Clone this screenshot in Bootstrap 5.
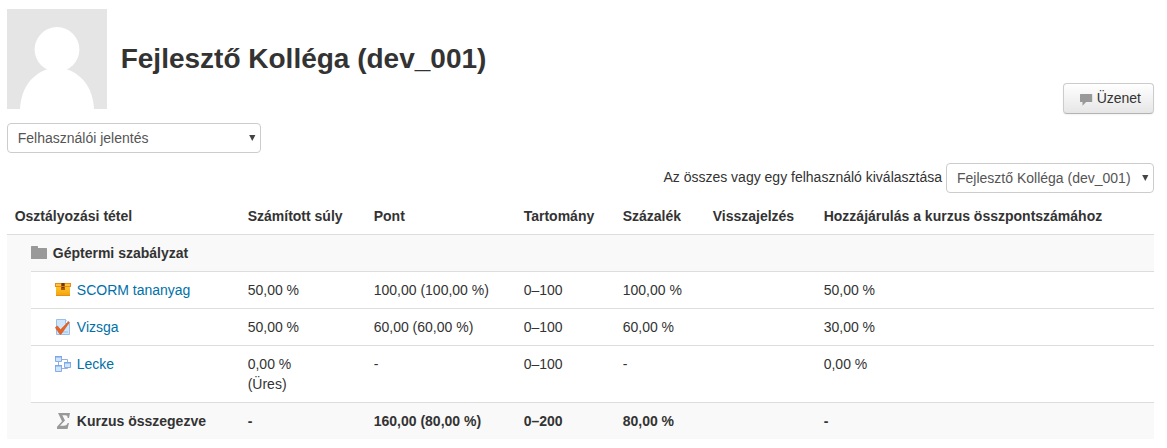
<!DOCTYPE html>
<html lang="hu">
<head>
<meta charset="utf-8">
<meta name="viewport" content="width=device-width, initial-scale=1">
<title>Felhasználói jelentés</title>
<link href="https://cdn.jsdelivr.net/npm/bootstrap@5.3.0/dist/css/bootstrap.min.css" rel="stylesheet">
<style>
body{font:14px/20px "Liberation Sans",Arial,sans-serif;color:#333;background:#fff;overflow:hidden}
.report{width:1147px;margin:9px 0 0 7px}
.avatar{width:100px;height:100px;display:block}
.user-name{font-size:28px;line-height:40px;font-weight:700;margin:0 0 0 13.700px}
.btn-message{height:31px;margin-bottom:-5px;padding:4px 12px 5px 16px;font-size:14px;line-height:20px;color:#333;border:1px solid #bbb;border-color:#ccc #ccc #b3b3b3;border-radius:4px;background:linear-gradient(#fff,#e6e6e6);box-shadow:inset 0 1px 0 rgba(255,255,255,.2),0 1px 2px rgba(0,0,0,.05);gap:4px}
.btn-message svg{margin-top:3px}
.picker{height:30px;font-size:14px;line-height:20px;color:#555;border:1px solid #ccc;border-radius:4px;padding:4px 20px 4px 10px;background-color:#fff;background-image:url("data:image/svg+xml,%3Csvg xmlns='http://www.w3.org/2000/svg' width='7' height='7'%3E%3Cpath d='M.2 0h6.200L3.300 6z' fill='%23444'/%3E%3C/svg%3E");background-size:7px 7px;background-position:right 4px top 11px}
.picker-report{width:254px;margin-top:14px;padding-left:9.700px}
.picker-user{width:208px}
.grades{table-layout:fixed;border-collapse:separate;border-spacing:0;color:#333;width:1147px;margin-top:5px;--bs-table-bg:transparent}
.grades>:not(caption)>*>*{padding:8px 8px 8px 7.700px;border:0;color:#333;vertical-align:top}
.grades tbody tr>*{border-top:1px solid #ddd!important}
.grades tbody>.shade>*{background:#f9f9f9}
.grades .rail{background:#f9f9f9;padding:0}
.grades tbody .rail{border-top:0!important}
.grades tbody tr>.item-name{padding-left:24px}
.item-name svg{width:16px;height:16px;flex:none;margin-top:2px}
.item-name div{gap:5.800px}
.item-name a{color:#0070a8;text-decoration:none}
</style>
</head>
<body>
<main class="report">
<header class="d-flex align-items-center">
<svg class="avatar" viewBox="0 0 100 100" aria-hidden="true"><path fill="#e5e5e5" d="M0 0h100v100H0z"/><g fill="#fff"><circle cx="50" cy="40.5" r="22.4"/><path d="M13 100c1-18 9-33 26.500-39.500h21C78 67 86 82 87 100z"/></g></svg>
<h1 class="user-name">Fejlesztő Kolléga (dev_001)</h1>
<button type="button" class="btn btn-message d-flex align-items-center ms-auto align-self-end"><svg width="13" height="13" viewBox="0 0 13 13" aria-hidden="true"><path fill="#999" d="M.6 1h11a.6.6 0 0 1 .6.6v6.800a.6.6 0 0 1-.6.6H6.100L2.500 12.700V9H.6a.6.6 0 0 1-.6-.6V1.600A.6.6 0 0 1 .6 1z"/></svg>Üzenet</button>
</header>
<div class="d-flex"><select class="form-select picker picker-report" aria-label="Jelentés"><option>Felhasználói jelentés</option></select></div>
<div class="d-flex justify-content-end" style="margin-top:10px;gap:4px"><label for="user" class="pt-1">Az összes vagy egy felhasználó kiválasztása</label><select id="user" class="form-select picker picker-user"><option>Fejlesztő Kolléga (dev_001)</option></select></div>
<table class="table grades mb-0">
<colgroup><col style="width:24px"><col style="width:209px"><col style="width:126px"><col style="width:150px"><col style="width:99px"><col style="width:90px"><col style="width:111px"><col style="width:338px"></colgroup>
<thead><tr><th colspan="2">Osztályozási tétel</th><th>Számított súly</th><th>Pont</th><th>Tartomány</th><th>Százalék</th><th>Visszajelzés</th><th>Hozzájárulás a kurzus összpontszámához</th></tr></thead>
<tbody>
<tr class="shade"><th colspan="8" class="item-name"><div class="d-flex"><svg viewBox="0 0 16 16"><path fill="#999" d="M0 1.600Q0 1 .6 1h5.800Q7 1 7 1.600V3h8.400q.6 0 .6.6v9.800q0 .6-.6.6H.6q-.6 0-.6-.6z"/></svg>Géptermi szabályzat</div></th></tr>
<tr><td class="rail" rowspan="4"></td><td class="item-name"><div class="d-flex"><svg viewBox="0 0 16 16"><defs><linearGradient id="box" x2="0" y2="1"><stop stop-color="#ffc42b"/><stop offset="1" stop-color="#efa20b"/></linearGradient></defs><path fill="url(#box)" d="M1 5h14v9H1z"/><path fill="#e78c18" d="M0 1h16v4H0zM1 13h14v1H1z"/><path fill="#ffc344" d="M1 2h14v2H1z"/><path fill="#ab5805" d="M6 1h4v7H6z"/><path fill="#713603" d="M7 1h2v5H7z"/><path fill="#d67b0e" d="M6 4h4v1H6z"/></svg><a href="#">SCORM tananyag</a></div></td><td>50,00 %</td><td>100,00 (100,00 %)</td><td>0–100</td><td>100,00 %</td><td></td><td>50,00 %</td></tr>
<tr><td class="item-name"><div class="d-flex"><svg viewBox="0 0 16 16"><path fill="#cfe5fa" stroke="#9abde9" d="M1.500.500h9l4 4v11h-13z"/><path fill="#f5faff" stroke="#9abde9" d="M10.500.500v4h4"/><path fill="#b3d3f4" d="M3 12h10v2H3z"/><path fill="#e86420" stroke="#cb4b15" stroke-width=".5" d="M.3 8.500 2.500 7l3 3.800L13.500 2.500l1 .7L6 15.300h-1z"/></svg><a href="#">Vizsga</a></div></td><td>50,00 %</td><td>60,00 (60,00 %)</td><td>0–100</td><td>60,00 %</td><td></td><td>30,00 %</td></tr>
<tr><td class="item-name"><div class="d-flex"><svg viewBox="0 0 16 16"><path fill="none" stroke="#9aafe0" d="M7 3.500h5.500V6M3.500 6v4M7 12.500h5.500V11"/><g fill="#cce6fd" stroke="#8aabe8"><path d="M.5.500h6v5h-6zM.5 9.500h6v6h-6zM9.500 6.500h6v5h-6z"/></g><path fill="#7ea4e8" d="M0 0h7v1.500H0zM0 9h7v1.500H0zM9 6h7v1.500H9z"/></svg><a href="#">Lecke</a></div></td><td>0,00 %<br>(Üres)</td><td>-</td><td>0–100</td><td>-</td><td></td><td>0,00 %</td></tr>
<tr class="shade"><th class="item-name"><div class="d-flex"><svg viewBox="0 0 16 16"><path fill="#999" d="M3 0h12l-1 5h-1.300c0-2-.7-2.700-2.700-2.700H7.300L10 7.500l-5 5.200h3.800c2.200 0 3.200-.8 3.900-2.700H14l-1.500 6H2v-2.200L7 8.200 4 2z"/></svg>Kurzus összegezve</div></th><th>-</th><th>160,00 (80,00 %)</th><th>0–200</th><th>80,00 %</th><th></th><th>-</th></tr>
</tbody>
</table>
</main>
<script src="https://cdn.jsdelivr.net/npm/bootstrap@5.3.0/dist/js/bootstrap.bundle.min.js"></script>
</body>
</html>
